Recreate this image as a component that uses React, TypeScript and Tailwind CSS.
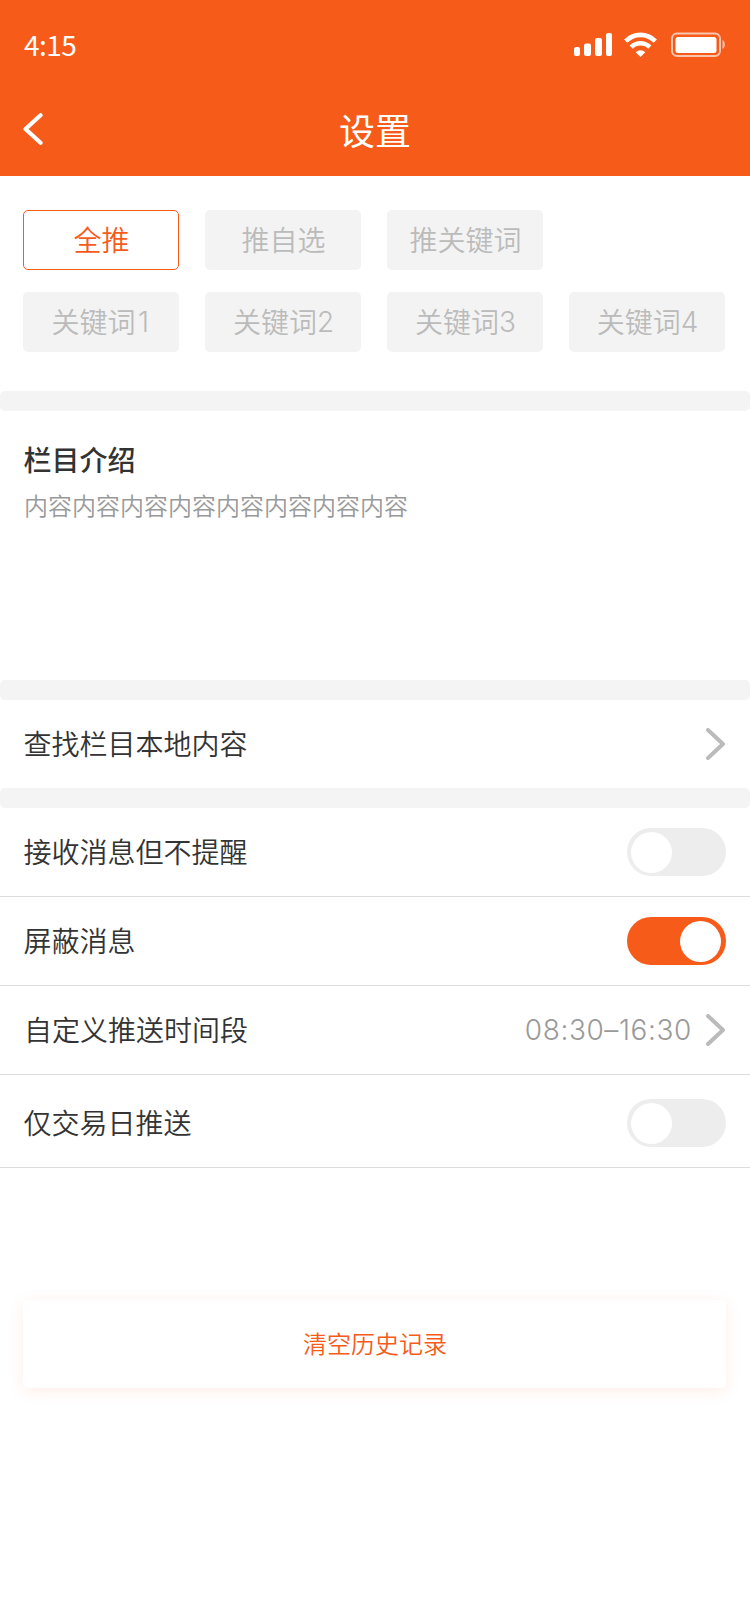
import React, { useState } from 'react';

interface Tag {
  id: string;
  label: string;
  num?: string;
}

const MODES: Tag[] = [
  { id: 'all', label: '全推' },
  { id: 'custom', label: '推自选' },
  { id: 'keyword', label: '推关键词' },
];

const KEYWORDS: Tag[] = [
  { id: 'k1', label: '关键词', num: '1' },
  { id: 'k2', label: '关键词', num: '2' },
  { id: 'k3', label: '关键词', num: '3' },
  { id: 'k4', label: '关键词', num: '4' },
];

const StatusBar: React.FC = () => (
  <div className="flex h-[90px] items-center justify-between pl-6 pr-[25px]">
    <span className="pb-[3px] text-[28px] font-normal leading-none tracking-[-0.5px]">4:15</span>
    <div className="flex items-start pb-px">
      <svg width="38" height="24" viewBox="0 0 38 24" fill="#fff">
        <rect x="0" y="15" width="6" height="9" rx="2" />
        <rect x="10" y="11.5" width="7" height="12.5" rx="2" />
        <rect x="21" y="6" width="7" height="18" rx="2" />
        <rect x="32" y="1" width="6" height="23" rx="2" />
      </svg>
      <svg className="ml-3" width="33" height="25" viewBox="0 0 33 25" fill="none" stroke="#fff">
        <path d="M1.7 9.2C10 .8 23 .8 31.3 9.2" strokeWidth="4.6" />
        <path d="M7.2 15.2C12.4 10 20.6 10 25.8 15.2" strokeWidth="4.6" />
        <path d="M16.5 25L11.7 20.3C14.4 17.4 18.6 17.4 21.3 20.3Z" fill="#fff" stroke="none" />
      </svg>
      <svg className="ml-[14px]" width="54" height="25" viewBox="0 0 54 25" fill="none">
        <rect x="1" y="1.5" width="48" height="22.5" rx="5" stroke="#fff" strokeOpacity=".65" strokeWidth="2" />
        <rect x="4.5" y="5" width="41" height="16" rx="2.5" fill="#fff" />
        <path d="M51.5 8V17C54.5 15.5 54.5 9.500 51.5 8Z" fill="#fff" fillOpacity=".65" />
      </svg>
    </div>
  </div>
);

const Chevron: React.FC = () => (
  <svg className="mr-px" width="19" height="32" viewBox="0 0 19 32" fill="none" stroke="#bbb" strokeWidth="4" strokeLinecap="round" strokeLinejoin="round">
    <path d="M2 2L17 16L2 30" />
  </svg>
);

const Divider: React.FC = () => <div className="h-5 rounded-[5px] bg-[#f4f4f4]" />;

const TagButton: React.FC<{ tag: Tag; active: boolean; onClick: () => void }> = ({ tag, active, onClick }) => (
  <button
    onClick={onClick}
    className={`flex h-[60px] items-center justify-center rounded-[5px] pb-0.5 pl-px text-[28px] ${
      active ? 'border border-[#f65b1a] bg-white text-[#f65b1a]' : 'bg-[#f3f3f3] text-[#bbb]'
    }`}
  >
    {tag.label}
    {tag.num && <span className="min-w-4 pt-0.5 text-center font-['Inter'] font-[350]">{tag.num}</span>}
  </button>
);

const Toggle: React.FC<{ on: boolean; onChange: () => void }> = ({ on, onChange }) => (
  <button
    role="switch"
    aria-checked={on}
    onClick={onChange}
    className={`flex h-12 w-[99px] rounded-full pl-1 pr-[5px] pt-1 ${on ? 'justify-end bg-[#f65b1a]' : 'justify-start bg-[#ededed]'}`}
  >
    <span className="size-[41px] rounded-full bg-white" />
  </button>
);

export default function App() {
  const [mode, setMode] = useState('all');
  const [silent, setSilent] = useState(false);
  const [blocked, setBlocked] = useState(true);
  const [tradeDay, setTradeDay] = useState(false);

  return (
    <div className="min-h-[1624px] w-[750px] bg-white font-['Noto_Sans_CJK_SC',sans-serif] text-[28px] font-[350] text-[#333]">
      <header className="h-44 bg-[#f65b1a] text-white">
        <StatusBar />
        <div className="grid h-[78px] grid-cols-[1fr_auto_1fr] items-center px-6">
          <svg className="-ml-px" width="20" height="32" viewBox="0 0 20 32" fill="none" stroke="#fff" strokeWidth="4.2" strokeLinecap="round" strokeLinejoin="round">
            <path d="M17.500 2.2L2.500 16L17.500 29.8" />
          </svg>
          <h1 className="text-4xl font-normal">设置</h1>
        </div>
      </header>

      <section className="flex h-[215px] flex-col gap-[22px] px-[23px] pt-[34px]">
        <div className="grid grid-cols-[repeat(4,156px)] gap-[26px]">
          {MODES.map(tag => (
            <TagButton key={tag.id} tag={tag} active={mode === tag.id} onClick={() => setMode(tag.id)} />
          ))}
        </div>
        <div className="grid grid-cols-[repeat(4,156px)] gap-[26px]">
          {KEYWORDS.map(tag => (
            <TagButton key={tag.id} tag={tag} active={mode === tag.id} onClick={() => setMode(tag.id)} />
          ))}
        </div>
      </section>

      <Divider />

      <section className="h-[269px] px-6 pt-[27px]">
        <h2 className="-ml-[0.5px] text-[28px] font-medium leading-[42px]">栏目介绍</h2>
        <p className="mt-[7px] text-2xl leading-9 text-[#999]">内容内容内容内容内容内容内容内容</p>
      </section>

      <Divider />

      <div className="flex h-[88px] items-center justify-between pl-[23.5px] pr-6">
        <span className="pb-0.5">查找栏目本地内容</span>
        <Chevron />
      </div>

      <Divider />

      <div className="flex h-[89px] items-center justify-between border-b border-[#ddd] pl-[23.5px] pr-6">
        <span className="pb-0.5">接收消息但不提醒</span>
        <Toggle on={silent} onChange={() => setSilent(!silent)} />
      </div>
      <div className="flex h-[89px] items-center justify-between border-b border-[#ddd] pl-[23.5px] pr-6">
        <span className="pb-0.5">屏蔽消息</span>
        <Toggle on={blocked} onChange={() => setBlocked(!blocked)} />
      </div>
      <div className="flex h-[89px] items-center justify-between border-b border-[#ddd] px-6">
        <span className="pb-0.5">自定义推送时间段</span>
        <div className="flex items-center gap-3.5">
          <span className="font-['Inter'] font-[350] tracking-[0.6px] text-[#999]">08:30–16:30</span>
          <Chevron />
        </div>
      </div>
      <div className="flex h-[93px] items-center justify-between border-b border-[#ddd] pl-[23.5px] pr-6 pt-1">
        <span className="pb-0.5">仅交易日推送</span>
        <Toggle on={tradeDay} onChange={() => setTradeDay(!tradeDay)} />
      </div>

      <div className="pl-[23px] pr-6 pt-[132px]">
        <button className="h-[88px] w-full rounded-[5px] bg-white pb-[3px] pl-px text-2xl text-[#f65b1a] shadow-[0_3px_16px_rgba(246,91,26,0.1)]">
          清空历史记录
        </button>
      </div>
    </div>
  );
}
